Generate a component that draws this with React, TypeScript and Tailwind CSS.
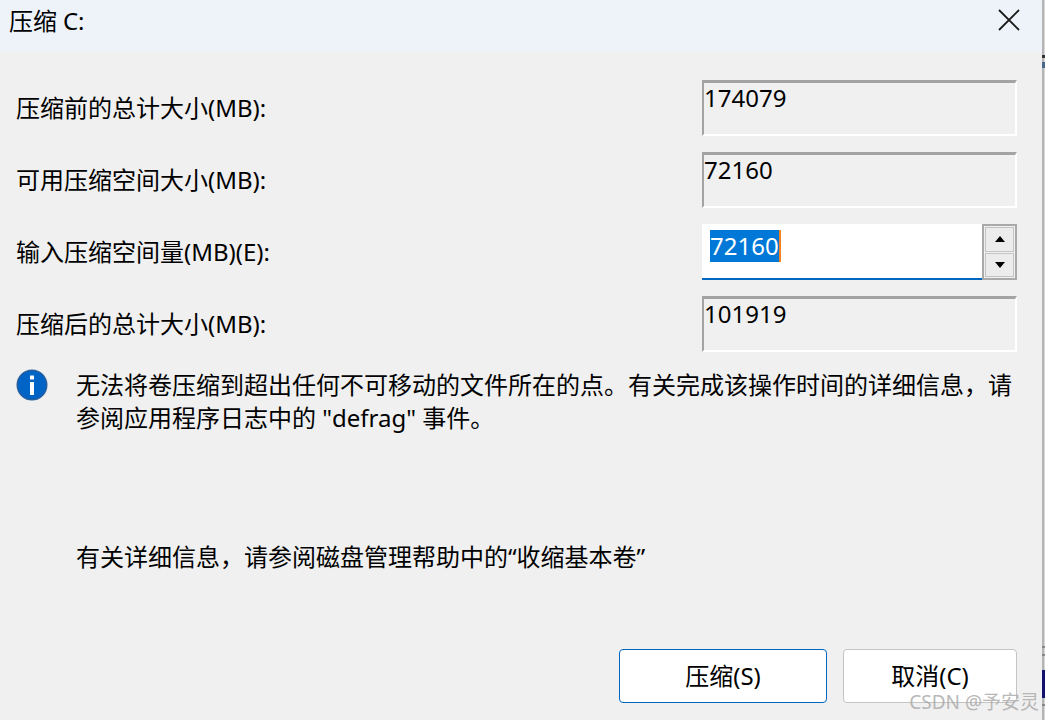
const font = "font-['Noto_Sans','Noto_Sans_CJK_SC',sans-serif]";

function ReadonlyRow({ label, value }: { label: string; value: string }) {
  return (
    <div className="flex h-[56px] items-start justify-between">
      <div className="mt-[13px] text-[24px] leading-[30px] text-black">{label}</div>
      <div className="box-border h-[56px] w-[315px] border-2 border-t-[3px] border-[#a3a3a3] border-r-white border-b-white bg-[#f0f0f0] text-[24px] leading-[29px] text-black">
        {value}
      </div>
    </div>
  );
}

export default function App() {
  return (
    <div className={`${font} relative flex h-[720px] w-[1045px] overflow-hidden bg-[#f0f0f0]`}>
      <div className="flex h-full w-[1042px] flex-col overflow-hidden rounded-tr-[6px] bg-[#f0f0f0]">
        <div className="flex h-[52px] shrink-0 items-center justify-between bg-[#eef3fa] pl-[9px] pr-[22px]">
          <div className="mb-[10px] text-[24px] leading-[30px] tracking-[-0.1px] text-black">压缩 C:</div>
          <svg width="22" height="22" viewBox="0 0 22 22" className="mb-[12px]">
            <path d="M1 1L21 21M21 1L1 21" stroke="#1a1a1a" strokeWidth="1.8" fill="none" />
          </svg>
        </div>
        <div className="flex flex-1 flex-col pl-[16px] pr-[25px]">
          <div className="mt-[28px] flex flex-col gap-[16px]">
            <ReadonlyRow label="压缩前的总计大小(MB):" value="174079" />
            <ReadonlyRow label="可用压缩空间大小(MB):" value="72160" />
            <div className="flex h-[56px] items-start justify-between">
              <div className="mt-[13px] text-[24px] leading-[30px] text-black">输入压缩空间量(MB)(E):</div>
              <div className="flex h-[56px] w-[315px]">
                <div className="box-border h-[56px] w-[280px] border-b-2 border-[#0067c0] bg-white pl-[8px] pt-[6px]">
                  <span className="inline-block h-[32px] border-r-2 border-[#f58220] bg-[#0078d7] text-[24px] leading-[32px] text-white">72160</span>
                </div>
                <div className="box-border flex h-[56px] w-[35px] flex-col gap-[1px] border-2 border-[#a9a9a9] bg-[#f0f0f0] p-[1px]">
                  <div className="flex h-[25px] items-center justify-center border border-[#c4c4c4] bg-[#ececec]">
                    <svg width="10" height="6" viewBox="0 0 10 6"><path d="M5 0L10 6H0Z" fill="#000" /></svg>
                  </div>
                  <div className="flex h-[25px] items-center justify-center border border-[#c4c4c4] bg-[#ececec]">
                    <svg width="10" height="6" viewBox="0 0 10 6"><path d="M0 0H10L5 6Z" fill="#000" /></svg>
                  </div>
                </div>
              </div>
            </div>
            <ReadonlyRow label="压缩后的总计大小(MB):" value="101919" />
          </div>
          <div className="mt-[16px] flex">
            <svg width="32" height="32" viewBox="0 0 32 32" className="mt-[1px] shrink-0">
              <circle cx="16" cy="16" r="15.5" fill="#2a5f9e" />
              <circle cx="16" cy="16" r="14" fill="#0063c6" />
              <rect x="14" y="13" width="4" height="13" fill="#fff" />
              <rect x="14" y="6.5" width="4" height="4" fill="#fff" />
            </svg>
            <div className="ml-[28px] w-[945px] text-[24px] leading-[33px] text-black">
              无法将卷压缩到超出任何不可移动的文件所在的点。有关完成该操作时间的详细信息，请参阅应用程序日志中的 "defrag" 事件。
            </div>
          </div>
          <div className="ml-[60px] mt-[106px] text-[24px] leading-[33px] text-black">
            有关详细信息，请参阅磁盘管理帮助中的“收缩基本卷”
          </div>
          <div className="mt-[76px] flex justify-end gap-[16px]">
            <button className="box-border h-[54px] w-[208px] rounded-[4px] border border-[#0067c0] bg-white text-[24px] text-black">压缩(S)</button>
            <button className="box-border h-[54px] w-[174px] rounded-[4px] border border-[#c4c4c4] bg-white text-[24px] text-black">取消(C)</button>
          </div>
        </div>
      </div>
      <div className="h-full w-[2px] bg-[#b5b5b5]" />
      <div className="h-full w-[1px] bg-[#d8d8d8]" />
      <div className="absolute left-[1042px] top-[55px] h-[3px] w-[3px] bg-[#333333]" />
      <div className="absolute left-[1042px] top-[62px] h-[6px] w-[3px] bg-[#4a6a8a]" />
      <div className="absolute left-[1042px] top-[670px] h-[28px] w-[3px] bg-[#12126e]" />
      <div className="absolute left-[1042px] top-[646px] h-[2px] w-[3px] bg-[#888888]" />
      <div className="absolute left-[1042px] top-[654px] h-[2px] w-[3px] bg-[#888888]" />
      <div className="absolute left-[1042px] top-[704px] h-[2px] w-[3px] bg-[#888888]" />
      <div className="absolute bottom-[6px] right-[6px] text-[19px] leading-[24px] text-[#a8a8a8] opacity-80">CSDN @予安灵</div>
    </div>
  );
}
